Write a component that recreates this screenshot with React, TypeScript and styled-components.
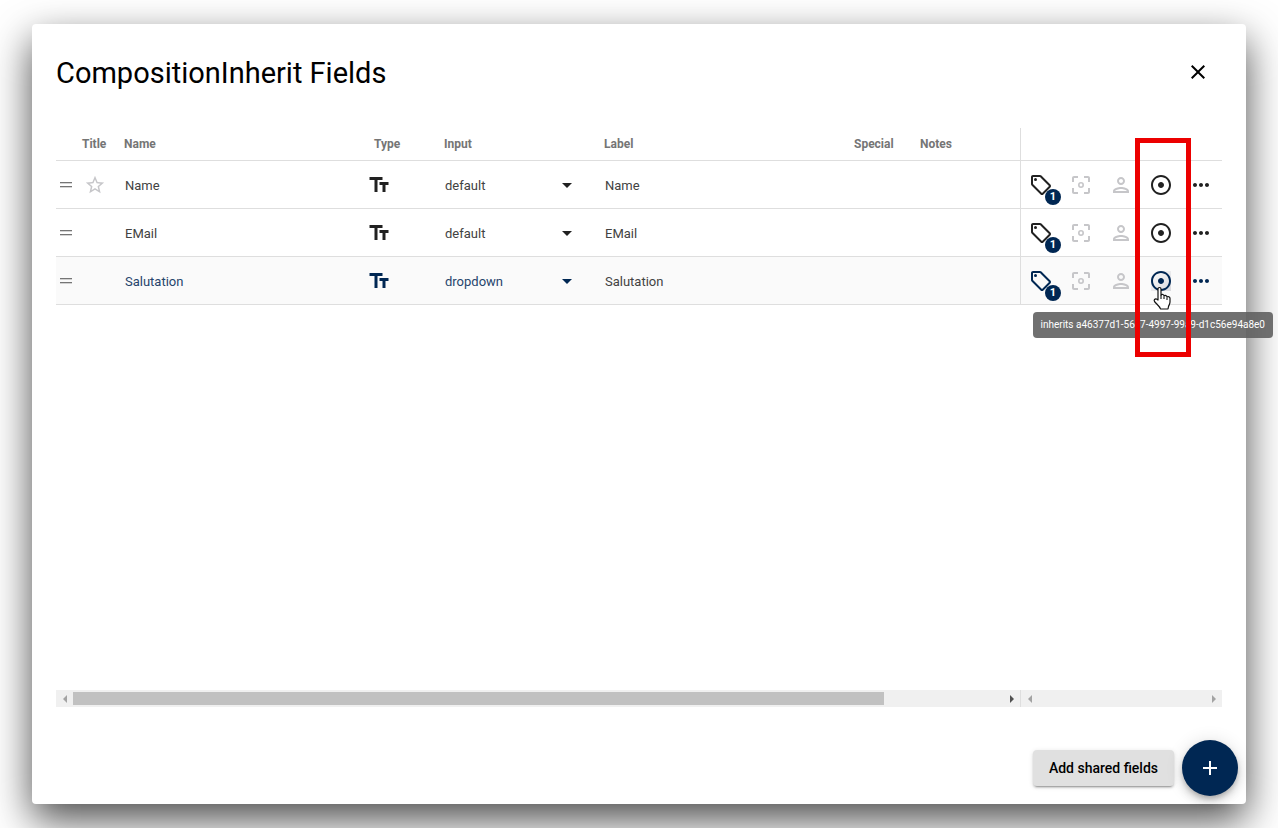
import React from "react";
import styled, { createGlobalStyle } from "styled-components";
import {
  MdAdd,
  MdAdjust,
  MdArrowDropDown,
  MdClose,
  MdMoreHoriz,
  MdOutlinePerson,
  MdStarBorder,
} from "react-icons/md";

const navy = "#002753";
const ink = "#212121";
const line = "#dedede";
const muted = "#c6c6c9";

const GlobalStyle = createGlobalStyle`
  * { box-sizing: border-box; }
  body {
    margin: 0;
    background: #fff;
    color: #000;
    font-family: Roboto, "Liberation Sans", sans-serif;
    font-size: 13px;
  }
  button, select { font: inherit; color: inherit; }
`;

const Backdrop = styled.div`
  display: flex;
  min-height: 100vh;
  padding: 24px 32px;
  overflow: hidden;
`;

const Dialog = styled.main`
  flex: 1;
  min-width: 0;
  display: flex;
  flex-direction: column;
  background: #fff;
  border-radius: 4px;
  box-shadow: 0 16px 40px rgba(0, 0, 0, 0.7);
`;

const Header = styled.header`
  display: flex;
  align-items: flex-start;
  justify-content: space-between;
  padding: 24px 24px 30px;
`;

const Title = styled.h1`
  margin: 0;
  font-size: 29px;
  line-height: 50px;
  font-weight: 400;
`;

const IconButton = styled.button<{ $size?: number; $color?: string }>`
  position: relative;
  display: flex;
  align-items: center;
  justify-content: center;
  flex: none;
  width: ${(p) => p.$size ?? 40}px;
  height: ${(p) => p.$size ?? 40}px;
  padding: 0;
  border: 0;
  border-radius: 50%;
  background: none;
  color: ${(p) => p.$color ?? "inherit"};
  cursor: pointer;
`;

const InheritButton = styled(IconButton)<{ $hovered: boolean }>`
  svg {
    background: ${(p) =>
      p.$hovered
        ? "linear-gradient(135deg, #fafafa 10%, #dcdce0 90%) center / 20px 20px no-repeat"
        : "none"};
  }
`;

const GridArea = styled.section`
  position: relative;
  flex: 1;
  display: flex;
  flex-direction: column;
  justify-content: space-between;
  margin: 0 24px;
`;

const Table = styled.table`
  width: 100%;
  table-layout: fixed;
  border-collapse: separate;
  border-spacing: 0;
`;

const Col = styled.col<{ $width?: number }>`
  width: ${(p) => (p.$width ? `${p.$width}px` : "auto")};
`;

const HeadCell = styled.th`
  height: 33px;
  padding: 0 0 0 10px;
  border-bottom: 1px solid ${line};
  color: #757575;
  font-size: 12px;
  font-weight: 700;
  text-align: left;

  &:last-child { border-left: 1px solid ${line}; }
`;

const Row = styled.tr<{ $active: boolean }>`
  color: ${(p) => (p.$active ? navy : ink)};
  background: ${(p) => (p.$active ? "#fafafa" : "transparent")};
`;

const Cell = styled.td<{ $pad?: number }>`
  height: 48px;
  padding: 1px 0 0 ${(p) => p.$pad ?? 11}px;
  border-bottom: 1px solid ${line};

  &:last-child { border-left: 1px solid ${line}; }
  svg { display: block; }
`;

const FieldText = styled.span<{ $active?: boolean }>`
  display: block;
  line-height: 18px;
  padding-top: 1px;
  color: ${(p) => (p.$active ? "#26446c" : "#424242")};
`;

const SelectBox = styled.div`
  position: relative;
  display: flex;
  align-items: center;
  width: 134px;

  svg {
    position: absolute;
    right: 0;
    pointer-events: none;
  }
`;

const Select = styled.select<{ $active: boolean }>`
  appearance: none;
  width: 100%;
  height: 24px;
  padding: 0 24px 0 0;
  border: 0;
  background: none;
  color: ${(p) => (p.$active ? "#26446c" : "#424242")};
`;

const Actions = styled.div`
  display: flex;
  align-items: center;
`;

const Badge = styled.span`
  position: absolute;
  right: 0;
  bottom: 0;
  width: 16px;
  height: 16px;
  border-radius: 50%;
  background: ${navy};
  color: #fff;
  font-size: 11px;
  line-height: 16px;
  font-weight: 700;
  text-align: center;
`;

const Scrollbars = styled.div`
  display: flex;
  height: 17px;
`;

const Track = styled.div<{ $pinned?: boolean }>`
  display: flex;
  align-items: center;
  justify-content: space-between;
  flex: ${(p) => (p.$pinned ? "0 0 202px" : "1")};
  background: #f0f0f0;
  border-left: ${(p) => (p.$pinned ? `1px solid ${line}` : "0")};
`;

const Lane = styled.div`
  flex: 1;
`;

const Thumb = styled.div`
  width: 87.2%;
  height: 13px;
  background: #c1c1c1;
`;

const ArrowButton = styled.button<{ $muted?: boolean; $right?: boolean }>`
  display: flex;
  align-items: center;
  justify-content: center;
  width: 17px;
  height: 17px;
  padding: 0;
  border: 0;
  background: none;

  &::before {
    content: "";
    border: 4px solid transparent;
    border-width: 4px ${(p) => (p.$right ? 0 : 4)}px 4px ${(p) => (p.$right ? 4 : 0)}px;
    border-${(p) => (p.$right ? "left" : "right")}-color: ${(p) => (p.$muted ? "#a3a3a3" : "#505050")};
  }
`;

const Footer = styled.footer`
  display: flex;
  align-items: center;
  justify-content: flex-end;
  gap: 8px;
  padding: 33px 8px 8px;
`;

const TextButton = styled.button`
  height: 36px;
  padding: 0 16px;
  border: 0;
  border-radius: 4px;
  background: #e0e0e0;
  color: #000;
  font-size: 14px;
  font-weight: 500;
  box-shadow: 0 3px 1px -2px rgba(0, 0, 0, 0.2), 0 2px 2px rgba(0, 0, 0, 0.14), 0 1px 5px rgba(0, 0, 0, 0.12);
`;

const Fab = styled(IconButton)`
  background: ${navy};
  box-shadow: 0 3px 5px -1px rgba(0, 0, 0, 0.2), 0 6px 10px rgba(0, 0, 0, 0.14), 0 1px 18px rgba(0, 0, 0, 0.12);
`;

const Tooltip = styled.div`
  position: absolute;
  top: 184px;
  right: -51px;
  padding: 6px 8px;
  border-radius: 4px;
  background: rgba(97, 97, 97, 0.9);
  color: #fff;
  font-size: 10px;
  line-height: 14px;
  font-weight: 400;
  white-space: nowrap;
`;

const Highlight = styled.div`
  position: absolute;
  top: 10px;
  right: 31px;
  width: 56px;
  height: 219px;
  border: 5px solid #ec0000;
  pointer-events: none;
`;

const Pointer = styled.svg`
  position: absolute;
  top: 158px;
  right: 51px;
  pointer-events: none;
`;

const DragIcon = () => (
  <svg width="18" height="18" viewBox="0 0 18 18" fill="#757575" aria-hidden="true">
    <rect x="3" y="6" width="12" height="1.300" />
    <rect x="3" y="10" width="12" height="1.300" />
  </svg>
);

const TagIcon = () => (
  <svg width="24" height="24" viewBox="0 0 24 24" fill="currentColor" aria-hidden="true">
    <path d="M21.41 11.58l-9-9C12.05 2.22 11.55 2 11 2H4c-1.1 0-2 .9-2 2v7c0 .55.22 1.05.59 1.42l9 9c.36.36.86.58 1.41.58s1.05-.22 1.41-.59l7-7c.37-.36.59-.86.59-1.41s-.23-1.06-.59-1.42zM13 20.01L4 11V4h7v-.01l9 9-7 7.02z" />
    <circle cx="6.5" cy="6.5" r="1.5" />
  </svg>
);

const FocusIcon = () => (
  <svg width="24" height="24" viewBox="0 0 24 24" fill="currentColor" aria-hidden="true">
    <path d="M5 15H3v4c0 1.1.9 2 2 2h4v-2H5v-4zM5 5h4V3H5c-1.1 0-2 .9-2 2v4h2V5zm14-2h-4v2h4v4h2V5c0-1.1-.9-2-2-2zm0 16h-4v2h4c1.1 0 2-.9 2-2v-4h-2v4z" />
    <circle cx="12" cy="12" r="2.2" fill="none" stroke="currentColor" strokeWidth="1.6" />
  </svg>
);

const TextIcon = () => (
  <svg width="24" height="24" viewBox="0 0 24 24" fill="currentColor" aria-hidden="true">
    <path d="M2.5 4v3h5v12h3V7h5V4h-13zm19 5h-9v3h3v7h3v-7h3V9z" />
  </svg>
);

const fields = [
  { name: "Name", input: "default", title: true, active: false },
  { name: "EMail", input: "default", title: false, active: false },
  { name: "Salutation", input: "dropdown", title: false, active: true },
];

export default function App() {
  return (
    <>
      <GlobalStyle />
      <Backdrop>
        <Dialog role="dialog" aria-labelledby="dialog-title">
          <Header>
            <Title id="dialog-title">CompositionInherit Fields</Title>
            <IconButton $size={48} aria-label="Close">
              <MdClose size={24} />
            </IconButton>
          </Header>
          <GridArea>
            <Table>
              <colgroup>
                <Col $width={16} />
                <Col $width={42} />
                <Col $width={250} />
                <Col $width={70} />
                <Col $width={160} />
                <Col $width={250} />
                <Col $width={66} />
                <Col />
                <Col $width={202} />
              </colgroup>
              <thead>
                <tr>
                  <HeadCell />
                  <HeadCell>Title</HeadCell>
                  <HeadCell>Name</HeadCell>
                  <HeadCell>Type</HeadCell>
                  <HeadCell>Input</HeadCell>
                  <HeadCell>Label</HeadCell>
                  <HeadCell>Special</HeadCell>
                  <HeadCell>Notes</HeadCell>
                  <HeadCell />
                </tr>
              </thead>
              <tbody>
                {fields.map((f) => (
                  <Row key={f.name} $active={f.active}>
                    <Cell $pad={1}>
                      <DragIcon />
                    </Cell>
                    <Cell $pad={12}>{f.title && <MdStarBorder size={22} color={muted} />}</Cell>
                    <Cell>
                      <FieldText $active={f.active}>{f.name}</FieldText>
                    </Cell>
                    <Cell $pad={3}>
                      <TextIcon />
                    </Cell>
                    <Cell>
                      <SelectBox>
                        <Select $active={f.active} aria-label={`${f.name} input`} defaultValue={f.input}>
                          <option>default</option>
                          <option>dropdown</option>
                        </Select>
                        <MdArrowDropDown size={24} />
                      </SelectBox>
                    </Cell>
                    <Cell>
                      <FieldText>{f.name}</FieldText>
                    </Cell>
                    <Cell />
                    <Cell />
                    <Cell $pad={0}>
                      <Actions>
                        <IconButton aria-label="Tags">
                          <TagIcon />
                          <Badge>1</Badge>
                        </IconButton>
                        <IconButton $color={muted} aria-label="Focus">
                          <FocusIcon />
                        </IconButton>
                        <IconButton $color={muted} aria-label="Permissions">
                          <MdOutlinePerson size={24} />
                        </IconButton>
                        <InheritButton $hovered={f.active} aria-label="Inheritance">
                          <MdAdjust size={24} />
                        </InheritButton>
                        <IconButton aria-label="More">
                          <MdMoreHoriz size={24} />
                        </IconButton>
                      </Actions>
                    </Cell>
                  </Row>
                ))}
              </tbody>
            </Table>
            <Scrollbars>
              <Track>
                <ArrowButton $muted aria-label="Scroll left" />
                <Lane>
                  <Thumb />
                </Lane>
                <ArrowButton $right aria-label="Scroll right" />
              </Track>
              <Track $pinned>
                <ArrowButton $muted aria-label="Scroll actions left" />
                <ArrowButton $muted $right aria-label="Scroll actions right" />
              </Track>
            </Scrollbars>
            <Tooltip role="tooltip">inherits a46377d1-56c7-4997-99a9-d1c56e94a8e0</Tooltip>
            <Highlight />
            <Pointer width="18" height="24" viewBox="0 0 18 24" aria-hidden="true">
              <path
                d="M5 14V3c0-2 3-2 3 0v6c1-1 3-.6 3 1 1-1 3-.5 3 1 1-.9 3-.3 3 1.4V16c0 2-1 3-1.500 4.500L15 23H7.500C7 20.500 4 18.500 1.500 15.500.500 14 2 12.500 3.500 13z"
                fill="#fff"
                stroke="#111"
                strokeWidth="1.200"
                strokeLinejoin="round"
              />
              <path d="M8 9v4M11 10.500V13M14 11.500V14" stroke="#111" strokeWidth="1.100" />
            </Pointer>
          </GridArea>
          <Footer>
            <TextButton>Add shared fields</TextButton>
            <Fab $size={56} $color="#fff" aria-label="Add field">
              <MdAdd size={24} />
            </Fab>
          </Footer>
        </Dialog>
      </Backdrop>
    </>
  );
}
